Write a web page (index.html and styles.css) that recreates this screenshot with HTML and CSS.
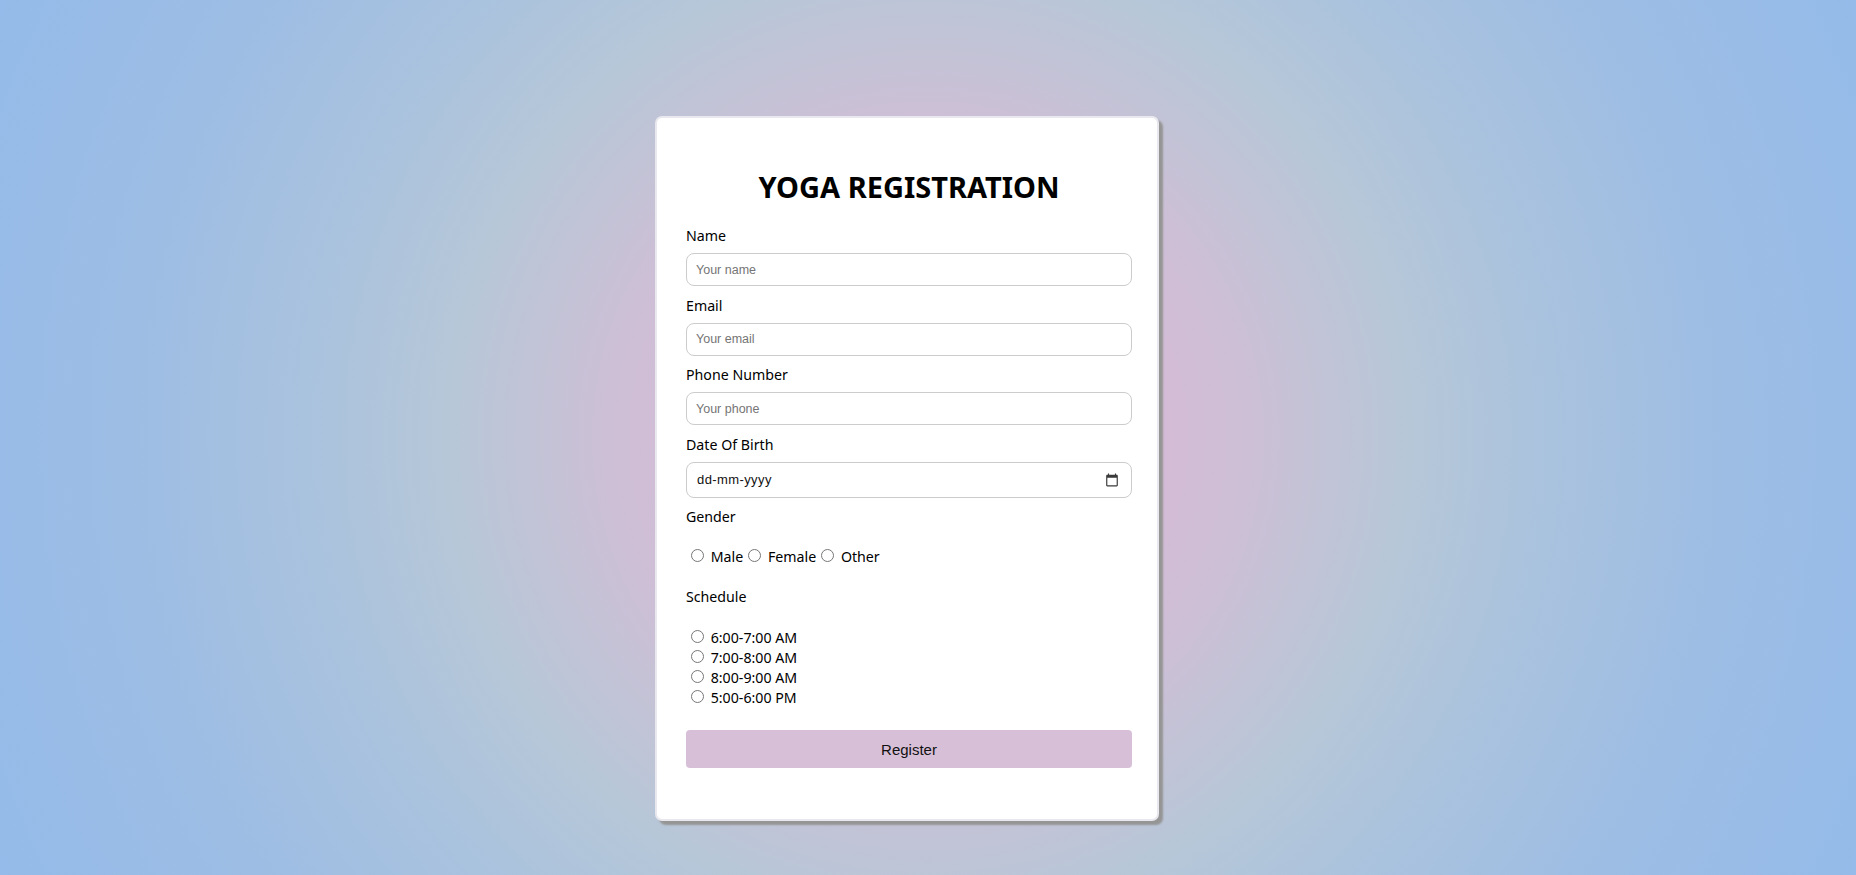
FILE: index.html
```html
<!DOCTYPE html>
<html lang="en-GB">
<head>
<meta charset="utf-8">
<title>Yoga Registration</title>
<link rel="stylesheet" href="styles.css">
</head>
<body>
  <form class="card">
    <h1 class="title">YOGA REGISTRATION</h1>
    <label class="field-label first" for="name">Name</label>
    <input class="text-input" type="text" id="name" placeholder="Your name">
    <label class="field-label" for="email">Email</label>
    <input class="text-input" type="email" id="email" placeholder="Your email">
    <label class="field-label" for="phone">Phone Number</label>
    <input class="text-input" type="tel" id="phone" placeholder="Your phone">
    <label class="field-label" for="dob">Date Of Birth</label>
    <div class="date-field">
      <input class="date-input" type="text" id="dob" placeholder="dd-mm-yyyy">
      <svg class="cal-icon" viewBox="0 0 24 24" width="14" height="14" aria-hidden="true"><path d="M20 3h-1V1h-2v2H7V1H5v2H4c-1.1 0-2 .9-2 2v16c0 1.1.9 2 2 2h16c1.1 0 2-.9 2-2V5c0-1.1-.9-2-2-2zm0 18H4V8h16v13z" fill="#3a3a3a"/></svg>
    </div>
    <label class="field-label">Gender</label>
    <div class="radio-row"><input class="radio" type="radio" name="gender" id="male"> <label for="male">Male</label><input class="radio" type="radio" name="gender" id="female"> <label for="female">Female</label><input class="radio" type="radio" name="gender" id="other"> <label for="other">Other</label></div>
    <label class="field-label schedule-label">Schedule</label>
    <div class="schedule">
      <div class="option"><input class="radio" type="radio" name="slot" id="s1"> <label for="s1">6:00-7:00 AM</label></div>
      <div class="option"><input class="radio" type="radio" name="slot" id="s2"> <label for="s2">7:00-8:00 AM</label></div>
      <div class="option"><input class="radio" type="radio" name="slot" id="s3"> <label for="s3">8:00-9:00 AM</label></div>
      <div class="option"><input class="radio" type="radio" name="slot" id="s4"> <label for="s4">5:00-6:00 PM</label></div>
    </div>
    <button class="submit" type="button">Register</button>
  </form>
</body>
</html>
```

FILE: styles.css
```css
html, body {
  margin: 0;
  min-height: 100vh;
}

body {
  background: radial-gradient(circle farthest-corner at 50% 50%,
    #e2b6d1 0%,
    #d5bbd6 22%,
    #cdbfd6 31%,
    #c0c4d6 40%,
    #b6c7d8 47%,
    #a9c2de 61%,
    #9dbde4 78%,
    #94bbe9 100%);
  font-family: "Noto Sans", "Open Sans", sans-serif;
  color: #000;
  display: flex;
  justify-content: center;
  align-items: flex-start;
  padding-top: 116px;
  box-sizing: border-box;
}

.card {
  box-sizing: border-box;
  width: 504px;
  margin-right: 42px;
  background: #fff;
  border: 2px solid #e8e8ee;
  border-radius: 7px;
  box-shadow: 4px 4px 2px #959595;
  padding: 49px 25px 51px 29px;
  display: flex;
  flex-direction: column;
}

.title {
  margin: 0 0 19px;
  font-size: 29px;
  line-height: 40px;
  font-weight: 700;
  text-align: center;
}

.field-label {
  display: block;
  font-size: 14.2px;
  line-height: 20px;
  margin-top: 9.5px;
}

.field-label.first {
  margin-top: 0;
}

.text-input {
  display: block;
  box-sizing: border-box;
  width: 100%;
  height: 33px;
  margin: 7px 0 0;
  padding: 0 9px;
  border: 1px solid #cccccc;
  border-radius: 8px;
  font-family: "Liberation Sans", Arial, sans-serif;
  font-size: 12.5px;
  background: #fff;
  outline: none;
}

.text-input::placeholder {
  color: #757575;
}

.date-field {
  box-sizing: border-box;
  height: 36px;
  margin-top: 7px;
  border: 1px solid #cccccc;
  border-radius: 8px;
  background: #fff;
  display: flex;
  align-items: center;
  padding: 0 12px 0 10px;
}

.date-input {
  flex: 1;
  min-width: 0;
  border: none;
  outline: none;
  padding: 0;
  background: transparent;
  font-family: "Liberation Sans", Arial, sans-serif;
  font-size: 13px;
  letter-spacing: 0.4px;
}

.date-input::placeholder {
  color: #111;
}

.cal-icon {
  flex: none;
  display: block;
}

.radio-row {
  margin-top: 18.5px;
  font-size: 14.2px;
  line-height: 20px;
}

.schedule-label {
  margin-top: 20.6px;
}

.schedule {
  margin-top: 20.4px;
  font-size: 14.2px;
}

.option {
  line-height: 20px;
  height: 20px;
}

.radio {
  margin: 3px 3px 0 5px;
}

.submit {
  margin-top: 23px;
  height: 38px;
  width: 100%;
  border: none;
  border-radius: 4px;
  background: #d8bfd8;
  color: #111;
  font-family: "Liberation Sans", Arial, sans-serif;
  font-size: 15px;
}
```
